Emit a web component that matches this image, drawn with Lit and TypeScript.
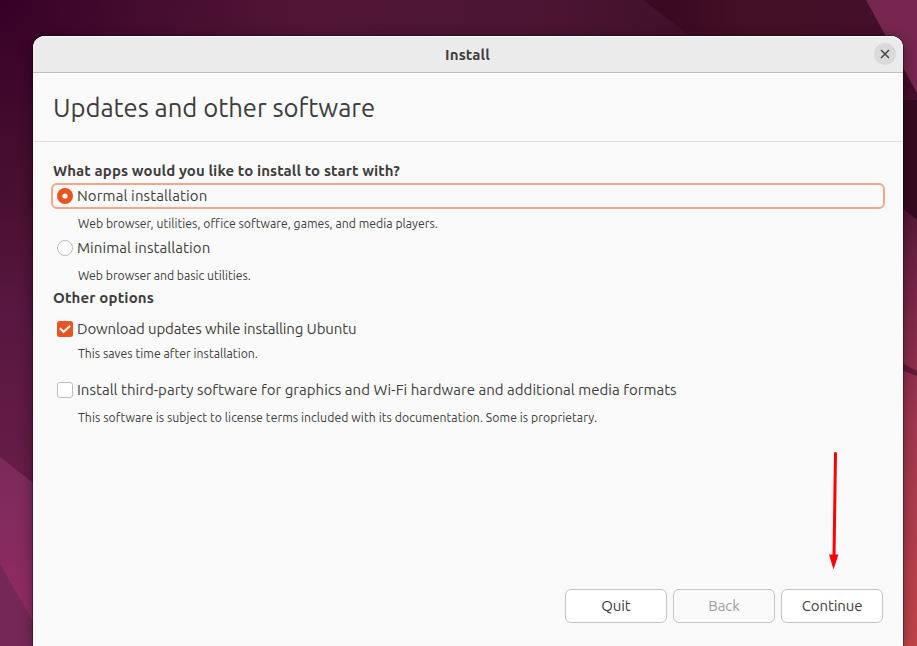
import { LitElement, html, css } from "lit";
import { customElement, property } from "lit/decorators.js";
import { classMap } from "lit/directives/class-map.js";
import { styleMap } from "lit/directives/style-map.js";

type Kind = "radio" | "checkbox";

interface Choice {
  kind: Kind;
  label: string;
  hint: string;
  checked: boolean;
  focused: boolean;
  labelTracking: number;
  hintTracking: number;
  hintGap: number;
}

const INSTALL_CHOICES: Choice[] = [
  { kind: "radio", label: "Normal installation", hint: "Web browser, utilities, office software, games, and media players.", checked: true, focused: true, labelTracking: 0.13, hintTracking: 0.025, hintGap: 4 },
  { kind: "radio", label: "Minimal installation", hint: "Web browser and basic utilities.", checked: false, focused: false, labelTracking: 0.08, hintTracking: 0, hintGap: 4 },
];

const OTHER_CHOICES: Choice[] = [
  { kind: "checkbox", label: "Download updates while installing Ubuntu", hint: "This saves time after installation.", checked: true, focused: false, labelTracking: -0.13, hintTracking: 0.03, hintGap: 1 },
  { kind: "checkbox", label: "Install third-party software for graphics and Wi-Fi hardware and additional media formats", hint: "This software is subject to license terms included with its documentation. Some is proprietary.", checked: false, focused: false, labelTracking: 0.03, hintTracking: 0.07, hintGap: 4 },
];

@customElement("desktop-wallpaper")
export class DesktopWallpaper extends LitElement {
  static styles = css`
    :host { display: block; }
    svg { display: block; width: 100%; height: 100%; }
  `;

  render() {
    return html`
      <svg viewBox="0 0 917 646" preserveAspectRatio="none">
        <defs>
          <radialGradient id="base" cx="0" cy="0" r="700" gradientUnits="userSpaceOnUse">
            <stop offset="0" stop-color="#360127" />
            <stop offset=".25" stop-color="#480e2f" />
            <stop offset=".45" stop-color="#521536" />
            <stop offset=".75" stop-color="#4c1533" />
            <stop offset="1" stop-color="#40102b" />
          </radialGradient>
          <linearGradient id="left" x1="0" y1="200" x2="0" y2="480" gradientUnits="userSpaceOnUse">
            <stop offset="0" stop-color="#501238" stop-opacity="0" />
            <stop offset=".4" stop-color="#581740" />
            <stop offset="1" stop-color="#661d46" />
          </linearGradient>
          <linearGradient id="pink" x1="0" y1="457" x2="0" y2="620" gradientUnits="userSpaceOnUse">
            <stop offset="0" stop-color="#7b2a5a" />
            <stop offset="1" stop-color="#922b63" />
          </linearGradient>
          <linearGradient id="dark" x1="640" y1="0" x2="880" y2="0" gradientUnits="userSpaceOnUse">
            <stop offset="0" stop-color="#370822" />
            <stop offset=".45" stop-color="#430f24" />
            <stop offset="1" stop-color="#430f2a" />
          </linearGradient>
          <linearGradient id="right" x1="0" y1="208" x2="0" y2="646" gradientUnits="userSpaceOnUse">
            <stop offset="0" stop-color="#511733" />
            <stop offset=".12" stop-color="#6c2142" />
            <stop offset=".34" stop-color="#8b2e4b" />
            <stop offset=".5" stop-color="#a0374f" />
            <stop offset="1" stop-color="#c04548" />
          </linearGradient>
        </defs>
        <rect width="917" height="646" fill="url(#base)" />
        <rect y="200" width="60" height="446" fill="url(#left)" />
        <path d="M0 457 L60 504 V646 H0Z" fill="url(#pink)" />
        <path d="M0 564 L47 646 H0Z" fill="#752858" />
        <path d="M643 0 H917 V240 H880 V60 H722Z" fill="url(#dark)" />
        <path d="M880 100 H917 V240 H880Z" fill="#360b20" />
        <path d="M866 0 H917 V93Z" fill="#76264f" />
        <path d="M880 190 L917 220 V646 H880Z" fill="url(#right)" />
        <path d="M895 359 L917 371 V376 L895 368Z" fill="#641a39" />
      </svg>
    `;
  }
}

@customElement("option-row")
export class OptionRow extends LitElement {
  static styles = css`
    :host { display: block; }
    .control {
      display: flex;
      align-items: center;
      gap: 4px;
      height: 26px;
      padding: 0 4px;
      margin: 0 -2px;
      box-sizing: border-box;
      border: 2px solid transparent;
      border-radius: 6px;
    }
    .control.focused { border-color: #f3a78d; }
    .mark { flex: none; display: block; width: 16px; height: 16px; }
    .label { font-size: 15px; line-height: 20px; white-space: nowrap; }
    .hint { padding-left: 25px; font-size: 12.22px; line-height: 22px; white-space: nowrap; }
  `;

  @property({ attribute: false }) choice!: Choice;

  private mark() {
    const { kind, checked } = this.choice;
    if (kind === "radio") {
      return checked
        ? html`<svg class="mark" viewBox="0 0 16 16"><circle cx="8" cy="8" r="8" fill="#e95420" /><circle cx="8" cy="8" r="2.6" fill="#fff" /></svg>`
        : html`<svg class="mark" viewBox="0 0 16 16"><circle cx="8" cy="8" r="7.5" fill="#fff" stroke="#bdbdbd" /></svg>`;
    }
    return checked
      ? html`<svg class="mark" viewBox="0 0 16 16"><rect width="16" height="16" rx="2.5" fill="#e95420" /><path d="M2.8 7.2 6.6 10.8 13.2 4.8" fill="none" stroke="#fff" stroke-width="2" /></svg>`
      : html`<svg class="mark" viewBox="0 0 16 16"><rect x=".5" y=".5" width="15" height="15" rx="2.5" fill="#fff" stroke="#bdbdbd" /></svg>`;
  }

  render() {
    const c = this.choice;
    return html`
      <div class=${classMap({ control: true, focused: c.focused })}>
        ${this.mark()}
        <span class="label" style=${styleMap({ letterSpacing: `${c.labelTracking}px` })}>${c.label}</span>
      </div>
      <div class="hint" style=${styleMap({ letterSpacing: `${c.hintTracking}px`, marginTop: `${c.hintGap}px` })}>${c.hint}</div>
    `;
  }
}

@customElement("app-root")
export class AppRoot extends LitElement {
  static styles = css`
    :host {
      display: grid;
      grid-template: 646px / 917px;
      overflow: hidden;
      font-family: Ubuntu, "Noto Sans", sans-serif;
      color: #3d3d3d;
    }
    .wallpaper, .window { grid-area: 1 / 1; }
    .window {
      display: flex;
      flex-direction: column;
      margin: 36px 14px 0 33px;
      border-radius: 12px 12px 0 0;
      background: #fafafa;
      box-shadow: 0 0 0 1px rgba(0, 0, 0, 0.3), 0 3px 14px rgba(0, 0, 0, 0.42);
      z-index: 1;
    }
    .titlebar {
      display: grid;
      grid-template-columns: 1fr auto 1fr;
      align-items: center;
      box-sizing: border-box;
      height: 37px;
      padding: 0 7px 0 6px;
      border-bottom: 1px solid #bfbfbf;
      border-radius: 12px 12px 0 0;
      background: #ebebeb;
      box-shadow: inset 0 1px #fff;
    }
    .title { grid-column: 2; font-size: 15px; font-weight: 700; line-height: 20px; padding-top: 1px; letter-spacing: 0.15px; }
    .close { justify-self: end; display: block; width: 22px; height: 22px; }
    .heading {
      box-sizing: border-box;
      height: 69px;
      margin: 0;
      padding: 17px 20px 0;
      border-bottom: 1px solid #dedede;
      font-size: 25.67px;
      font-weight: 400;
      line-height: 36px;
      letter-spacing: -0.04px;
    }
    .form { flex: 1; padding: 19px 20px 0; }
    .section { margin: 0; font-size: 15px; font-weight: 700; line-height: 20px; white-space: nowrap; }
    .question { letter-spacing: 0.1px; margin-bottom: 2px; }
    .other { letter-spacing: 0.16px; margin: 1px 0 8px; }
    .installs, .extras { display: flex; flex-direction: column; }
    .extras { gap: 12px; }
    .actions {
      display: flex;
      justify-content: flex-end;
      gap: 6px;
      padding: 0 20px 23px;
    }
    .button {
      box-sizing: border-box;
      width: 102px;
      height: 34px;
      padding: 0;
      border: 1px solid #c5c5c5;
      border-radius: 6px;
      background: #fff;
      color: inherit;
      font: 400 15px/20px Ubuntu, "Noto Sans", sans-serif;
      letter-spacing: -0.1px;
    }
    .button:disabled { background: #fafafa; color: #a0a0a0; }
    .pointer { position: absolute; left: 825px; top: 448px; width: 18px; height: 124px; z-index: 2; }
  `;

  render() {
    return html`
      <desktop-wallpaper class="wallpaper"></desktop-wallpaper>
      <main class="window">
        <header class="titlebar">
          <span class="title">Install</span>
          <svg class="close" viewBox="0 0 22 22">
            <circle cx="11" cy="11" r="11" fill="#dadada" />
            <path d="M7 7 15 15 M15 7 7 15" stroke="#3d3d3d" stroke-width="1.4" />
          </svg>
        </header>
        <h1 class="heading">Updates and other software</h1>
        <section class="form">
          <h2 class="section question">What apps would you like to install to start with?</h2>
          <div class="installs">
            ${INSTALL_CHOICES.map((c) => html`<option-row .choice=${c}></option-row>`)}
          </div>
          <h2 class="section other">Other options</h2>
          <div class="extras">
            ${OTHER_CHOICES.map((c) => html`<option-row .choice=${c}></option-row>`)}
          </div>
        </section>
        <footer class="actions">
          <button class="button">Quit</button>
          <button class="button" disabled>Back</button>
          <button class="button">Continue</button>
        </footer>
      </main>
      <svg class="pointer" viewBox="825 448 18 124">
        <path d="M835.5 453.5 834 557" stroke="#f00" stroke-width="3" stroke-linecap="round" />
        <path d="M829 554.5 838.5 554.5 833.5 569.5Z" fill="#f00" />
      </svg>
    `;
  }
}
